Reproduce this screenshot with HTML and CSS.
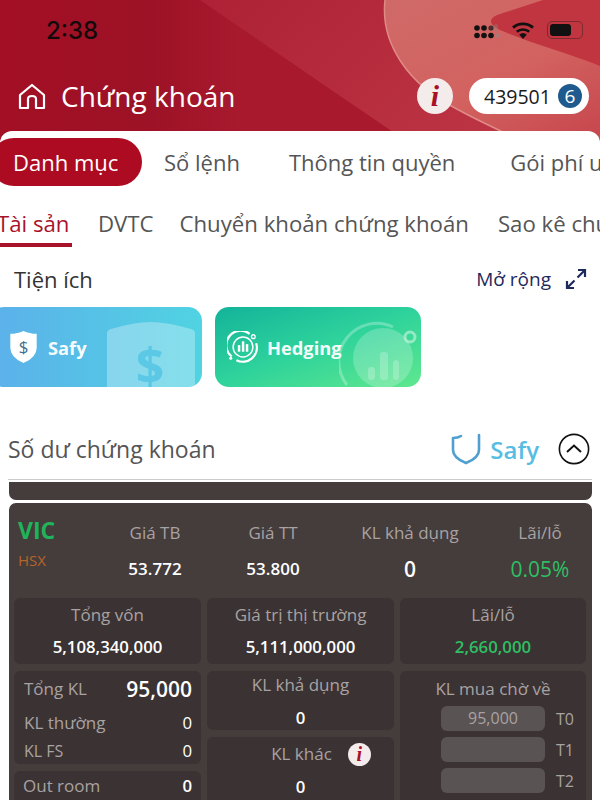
FILE: index.html
```html
<!DOCTYPE html>
<html lang="en">
<head>
  <meta charset="UTF-8" />
  <title>Chứng khoán</title>
  <meta name="viewport" content="width=device-width, initial-scale=1.0" />
  <link rel="stylesheet" href="styles.css">
</head>
<body>
<div class="screen">

  <!-- header -->
  <header class="top">
    <svg class="top-bg" viewBox="0 0 600 145" preserveAspectRatio="none">
      <defs>
        <linearGradient id="band" x1="0" y1="0" x2="1" y2="0.4">
          <stop offset="0" stop-color="#ae2136"/>
          <stop offset="1" stop-color="#bd3644"/>
        </linearGradient>
        <linearGradient id="pale" x1="0" y1="0" x2="0.8" y2="1">
          <stop offset="0" stop-color="#cf6a69"/>
          <stop offset="0.6" stop-color="#d2625f"/>
          <stop offset="1" stop-color="#c84a50"/>
        </linearGradient>
      </defs>
      <path d="M200 0 L600 0 L600 145 L412 145 Z" fill="url(#band)"/>
      <path d="M385 0 C380 45 410 85 455 108 C480 122 510 135 530 145 L600 145 L600 0 Z" fill="url(#pale)"/>
      <path d="M385 0 C380 45 410 85 455 108 C480 122 510 135 530 145" fill="none" stroke="#e08a86" stroke-width="1.5"/>
      <path d="M543 0 L500 14 C488 18 488 24 500 30 C535 45 565 52 600 66 L600 0 Z" fill="#c0353f"/>
    </svg>

    <div class="status">
      <span class="clock">2:38</span>
      <div class="status-icons">
        <svg class="dots" width="26" height="15" viewBox="0 0 26 15">
          <g fill="#111">
            <circle cx="3" cy="4" r="2.8"/><circle cx="10" cy="4" r="2.8"/>
            <circle cx="3" cy="11.5" r="2.8"/><circle cx="10" cy="11.5" r="2.8"/><circle cx="17" cy="11.5" r="2.8"/>
            <circle cx="17" cy="4" r="2.6" fill-opacity=".7"/>
          </g>
          <circle cx="23.5" cy="11.5" r="2" fill="#888" fill-opacity=".6"/>
          <rect x="20" y="0" width="4" height="7" rx="2" fill="#888" fill-opacity=".4"/>
        </svg>
        <svg width="24" height="17" viewBox="0 0 24 17">
          <path d="M12 17 L8.2 12.6 A6 6 0 0 1 15.8 12.6 Z" fill="#111"/>
          <path d="M5.8 9.8 A9.4 9.4 0 0 1 18.2 9.8" fill="none" stroke="#111" stroke-width="2.6"/>
          <path d="M2 5.6 A15 15 0 0 1 22 5.6" fill="none" stroke="#111" stroke-width="2.8"/>
        </svg>
        <div class="battery"><span class="battery-fill"></span></div>
      </div>
    </div>

    <div class="titlebar">
      <svg class="home" width="28" height="27" viewBox="0 0 28 27" fill="none" stroke="#fff" stroke-width="2.2" stroke-linejoin="round">
        <path d="M2 12 L14 2 L26 12 V25 H18 V16 Q18 13 14 13 Q10 13 10 16 V25 H2 Z"/>
      </svg>
      <h1 class="title">Chứng khoán</h1>
      <span class="info-btn">i</span>
      <div class="account">
        <span>439501</span>
        <span class="account-num">6</span>
      </div>
    </div>
  </header>

  <!-- white sheet -->
  <main class="sheet">
    <nav class="tabs">
      <span class="tab tab-on">Danh mục</span>
      <span class="tab tab-so">Sổ lệnh</span>
      <span class="tab tab-tt">Thông tin quyền</span>
      <span class="tab tab-fee">Gói phí ưu đãi</span>
    </nav>

    <nav class="subtabs">
      <span class="subtab subtab-on">Tài sản</span>
      <span class="subtab">DVTC</span>
      <span class="subtab subtab-move">Chuyển khoản chứng khoán</span>
      <span class="subtab">Sao kê chứng khoán</span>
    </nav>

    <div class="util-head">
      <span class="util-title">Tiện ích</span>
      <span class="util-more">Mở rộng</span>
      <svg width="22" height="22" viewBox="0 0 22 22" fill="none" stroke="#1f2a5c" stroke-width="2.2">
        <path d="M13 2 H20 V9 M20 2 L12.5 9.5"/>
        <path d="M2 13 V20 H9 M2 20 L9.5 12.5"/>
      </svg>
    </div>

    <div class="util-cards">
      <div class="card card-safy">
        <svg class="card-art" width="88" height="65" viewBox="0 0 88 65">
          <path d="M0 11 Q0 8 4 7 Q28 0 43 0 Q60 0 84 7 Q88 8 88 11 V65 H0 Z" fill="#fff" fill-opacity=".3"/>
          <text x="43" y="62" text-anchor="middle" class="art-dollar">$</text>
        </svg>
        <svg width="27" height="32" viewBox="0 0 28 34">
          <path d="M14 0 Q20 3 28 3 V18 Q28 28 14 34 Q0 28 0 18 V3 Q8 3 14 0 Z" fill="#fff"/>
          <text x="14" y="23" text-anchor="middle" class="shield-dollar">$</text>
        </svg>
        <span class="card-name">Safy</span>
      </div>
      <div class="card card-hedge">
        <svg class="card-art" width="82" height="70" viewBox="0 0 82 70" fill="none">
          <path d="M8 68 A38 38 0 0 1 54 10" stroke="#fff" stroke-opacity=".28" stroke-width="3"/>
          <circle cx="44" cy="41" r="30" fill="#fff" fill-opacity=".22"/>
          <circle cx="71" cy="20" r="5" stroke="#fff" stroke-opacity=".45" stroke-width="3"/>
          <g fill="#fff" fill-opacity=".22">
            <rect x="29" y="50" width="7" height="13" rx="3"/>
            <rect x="41" y="35" width="8" height="28" rx="3"/>
            <rect x="54" y="43" width="6" height="20" rx="3"/>
          </g>
        </svg>
        <svg width="32" height="32" viewBox="0 0 34 34" fill="none" stroke="#fff">
          <path d="M5 27 A15 15 0 0 1 24 3" stroke-width="2.4"/>
          <path d="M31 13 A15 15 0 0 1 10 31" stroke-width="2.4"/>
          <circle cx="17" cy="17" r="10.5" stroke-width="1.6"/>
          <circle cx="28" cy="6" r="2" stroke-width="1.4"/>
          <circle cx="4" cy="29" r="1.6" fill="#fff" stroke="none"/>
          <g fill="#fff" stroke="none">
            <rect x="11.5" y="15" width="2.6" height="7"/>
            <rect x="15.8" y="11" width="2.6" height="11"/>
            <rect x="20" y="14" width="2.6" height="8"/>
          </g>
        </svg>
        <span class="card-name">Hedging</span>
      </div>
    </div>

    <div class="balance-head">
      <span class="balance-title">Số dư chứng khoán</span>
      <svg width="30" height="32" viewBox="0 0 30 32" fill="none" stroke="#4f9fd0" stroke-width="2.6" stroke-linecap="round">
        <path d="M2 5 V17 Q2 25 15 30 Q28 25 28 17 V2 M2 5 Q7 5 10 3"/>
      </svg>
      <span class="balance-safy">Safy</span>
      <svg class="collapse" width="32" height="32" viewBox="0 0 32 32" fill="none" stroke="#111">
        <circle cx="16" cy="16" r="14.6" stroke-width="1.6"/>
        <path d="M9 19 L16 12.5 L23 19" stroke-width="2"/>
      </svg>
    </div>

    <div class="stub"></div>

    <!-- stock panel -->
    <section class="stock">
      <div class="stock-head">
        <div class="stock-id">
          <span class="symbol">VIC</span>
          <span class="market">HSX</span>
        </div>
        <div class="stat"><span class="label">Giá TB</span><span class="stat-val">53.772</span></div>
        <div class="stat"><span class="label">Giá TT</span><span class="stat-val">53.800</span></div>
        <div class="stat"><span class="label">KL khả dụng</span><span class="stat-val stat-big">0</span></div>
        <div class="stat"><span class="label">Lãi/lỗ</span><span class="stat-val stat-pct">0.05%</span></div>
      </div>

      <div class="stock-grid">
        <div class="box box-top"><span class="label">Tổng vốn</span><span class="val">5,108,340,000</span></div>
        <div class="box box-top"><span class="label">Giá trị thị trường</span><span class="val">5,111,000,000</span></div>
        <div class="box box-top"><span class="label">Lãi/lỗ</span><span class="val val-green">2,660,000</span></div>

        <div class="col">
          <div class="box box-list">
            <div class="kv kv-total"><span class="label">Tổng KL</span><span class="val-big">95,000</span></div>
            <div class="kv kv-normal"><span class="label">KL thường</span><span class="val">0</span></div>
            <div class="kv kv-fs"><span class="label label-sm">KL FS</span><span class="val">0</span></div>
          </div>
          <div class="box box-room">
            <div class="kv"><span class="label">Out room</span><span class="val">0</span></div>
          </div>
        </div>

        <div class="col">
          <div class="box box-avail"><span class="label">KL khả dụng</span><span class="val">0</span></div>
          <div class="box box-other">
            <div class="other-head">
              <span class="label">KL khác</span>
              <span class="info-sm">i</span>
            </div>
            <span class="val">0</span>
          </div>
        </div>

        <div class="box box-wait">
          <span class="label">KL mua chờ về</span>
          <div class="wait-row"><span class="wait-field">95,000</span><span class="wait-t">T0</span></div>
          <div class="wait-row"><span class="wait-field"></span><span class="wait-t">T1</span></div>
          <div class="wait-row"><span class="wait-field"></span><span class="wait-t">T2</span></div>
        </div>
      </div>
    </section>
  </main>
</div>
</body>
</html>
```

FILE: styles.css
```css
* { box-sizing: border-box; }
html, body { margin: 0; padding: 0; background: #fff; }
body { font-family: "Open Sans", "Liberation Sans", sans-serif; }

.screen { width: 600px; height: 800px; overflow: hidden; position: relative; }

/* header */
.top { position: relative; height: 145px; background: linear-gradient(90deg, #a30f25 0%, #9d1226 25%, #a8192e 40%); padding: 0 11px 0 18px; }
.top-bg { position: absolute; left: 0; top: 0; width: 600px; height: 145px; }
.status { position: relative; display: flex; align-items: center; height: 60px; padding-left: 28px; }
.clock { font-family: Inter, "Open Sans", sans-serif; font-size: 24px; font-weight: 500; color: #120a0a; }
.status-icons { margin-left: auto; display: flex; align-items: center; gap: 12px; padding-right: 5px; }
.dots { margin-top: 2px; margin-right: -1px; }
.battery { width: 36px; height: 18px; border: 1.5px solid #7c2a30; border-radius: 5px; padding: 2px; margin-right: 1px; }
.battery-fill { display: block; width: 21px; height: 100%; background: #111; border-radius: 3px; }

.titlebar { position: relative; display: flex; align-items: center; height: 36px; margin-top: 18px; }
.home { margin-right: 15px; }
.title { margin: 0; font-size: 28px; font-weight: 500; color: #fff; line-height: 36px; }
.info-btn { margin-left: auto; width: 36px; height: 36px; border-radius: 50%; background: #f3eceb; color: #a90f27; font-family: "Liberation Serif", serif; font-style: italic; font-weight: 700; font-size: 30px; line-height: 36px; text-align: center; }
.account { margin-left: 16px; width: 120px; height: 36px; border-radius: 18px; background: #fff; display: flex; align-items: center; padding-left: 15px; gap: 7px; font-size: 19.5px; color: #1a1a1a; }
.account-num { width: 24px; height: 24px; border-radius: 50%; background: #1f5a8e; color: #fff; text-align: center; line-height: 24px; font-size: 19px; }

/* sheet */
.sheet { position: absolute; left: 0; right: 0; top: 131px; bottom: 0; background: #fff; border-radius: 12px 12px 0 0; }

.tabs { display: flex; align-items: center; white-space: nowrap; overflow: hidden; height: 48px; margin-top: 7px; font-size: 22px; color: #555; }
.tab { flex: none; margin-left: 50px; }
.tab-on { margin-left: -10px; width: 152px; height: 48px; line-height: 48px; padding-left: 23px; border-radius: 24px; background: #ad0b22; color: #fff; }
.tab-so { margin-left: 22px; }
.tab-tt { margin-left: 49px; }
.tab-fee { margin-left: 55px; }

.subtabs { display: flex; white-space: nowrap; overflow: hidden; height: 49px; margin-top: 12px; font-size: 22.2px; color: #555; gap: 29px; }
.subtab { flex: none; line-height: 51px; height: 49px; }
.subtab-on { color: #a8132b; border-bottom: 4px solid #a8132b; width: 72px; margin-right: -3px; text-indent: -3px; }
.subtab-move { margin-left: -3px; }

.util-head { display: flex; align-items: center; height: 30px; margin-top: 17px; padding: 0 13px 0 14px; }
.util-title { font-size: 22px; color: #333; }
.util-more { margin-left: auto; margin-right: 14px; font-size: 19px; color: #1f2a5c; }

.util-cards { display: flex; gap: 13px; margin-top: 13px; margin-left: -10px; }
.card { position: relative; overflow: hidden; height: 80px; border-radius: 14px; display: flex; align-items: center; }
.card-safy { width: 212px; padding-left: 20px; gap: 11px; background: linear-gradient(90deg, #5cb0ea, #50d3e2); }
.card-hedge { width: 206px; padding-left: 12px; gap: 8px; background: linear-gradient(160deg, #12b39a, #2fd39b 50%, #5fe88e); }
.card-art { position: absolute; right: 0; bottom: 0; }
.card-safy .card-art { right: 7px; }
.card-name { position: relative; font-size: 18.3px; font-weight: 700; color: #fff; opacity: .95; }
.art-dollar { font-family: "Open Sans", sans-serif; font-size: 50px; font-weight: 700; fill: #4cc3e4; fill-opacity: .75; }
.shield-dollar { font-family: "Open Sans", sans-serif; font-size: 18px; font-weight: 400; fill: #3f6f90; }

.balance-head { display: flex; align-items: center; height: 32px; margin-top: 46px; margin-left: 8px; padding-right: 10px; }
.balance-title { font-size: 23px; color: #555; margin-right: auto; }
.balance-safy { font-size: 24px; font-weight: 600; color: #58bde2; margin-left: 9px; }
.collapse { margin-left: 19px; }

.stub { margin: 14px 8px 0; border-top: 1px solid #ccc; height: 24px; }
.stub::after { content: ""; display: block; height: 18px; margin: 2px 0 0 1px; background: #453c3c; border-radius: 0 0 7px 7px; }

.stock { margin: 0 8px 0 9px; background: #453c3c; border-radius: 7px 7px 0 0; padding: 0 6px 0 5px; height: 330px; }
.stock-head { display: grid; grid-template-columns: 88px 116px 120px 154px 106px; margin-left: -5px; height: 95px; padding-top: 12px; }
.stock-id { display: flex; flex-direction: column; padding-left: 9px; }
.symbol { font-size: 23px; font-weight: 700; color: #1fb45a; line-height: 30px; }
.market { font-size: 15px; color: #b5652a; margin-top: 4px; line-height: 22px; }
.stat { display: flex; flex-direction: column; align-items: center; padding-top: 6px; }
.label { font-size: 17px; color: #a8a2a2; line-height: 24px; white-space: nowrap; }
.stat-val { font-size: 17px; font-weight: 600; color: #fff; line-height: 24px; margin-top: 12px; }
.stat-big { font-size: 21px; }
.stat-pct { font-size: 21px; font-weight: 400; color: #2fbf63; }

.stock-grid { display: grid; grid-template-columns: 187px 187px 186px; grid-template-rows: 66px auto; gap: 7px 6px; }
.col { display: flex; flex-direction: column; gap: 7px; }
.box { background: #3b3233; border-radius: 6px; }
.val { font-size: 16.8px; font-weight: 600; color: #fff; line-height: 24px; }
.val-green { color: #2fbf63; }
.box-top { display: flex; flex-direction: column; align-items: center; padding-top: 5px; gap: 8px; }

.box-list { height: 93px; padding: 6px 9px 0 10px; }
.kv { display: flex; justify-content: space-between; align-items: center; }
.kv-total { height: 24px; }
.kv-normal { margin-top: 9px; height: 26px; }
.kv-fs { margin-top: 3px; }
.kv .val { font-weight: 400; }
.label-sm { font-size: 16px; }
.val-big { font-size: 21px; font-weight: 600; color: #fff; }
.box-room { height: 60px; padding: 3px 9px 0 9px; }
.box-room .val { font-weight: 600; }

.box-avail { height: 59px; display: flex; flex-direction: column; align-items: center; padding-top: 2px; gap: 9px; }
.box-other { height: 70px; display: flex; flex-direction: column; align-items: center; padding-top: 5px; gap: 9px; }
.other-head { display: flex; align-items: center; gap: 16px; padding-left: 41px; }
.info-sm { width: 23px; height: 23px; border-radius: 50%; background: #f4ecec; color: #a90f27; font-family: "Liberation Serif", serif; font-style: italic; font-weight: 700; font-size: 20px; line-height: 23px; text-align: center; }

.box-wait { height: 160px; display: flex; flex-direction: column; padding-top: 6px; }
.box-wait .label { text-align: center; margin-bottom: 5px; }
.wait-row { display: flex; align-items: center; padding-left: 41px; gap: 11px; margin-bottom: 6px; }
.wait-field { width: 104px; height: 25px; border-radius: 6px; background: #5a5353; color: #a8a2a2; font-size: 16px; line-height: 25px; text-align: center; }
.wait-t { font-size: 16px; color: #a8a2a2; }
```
